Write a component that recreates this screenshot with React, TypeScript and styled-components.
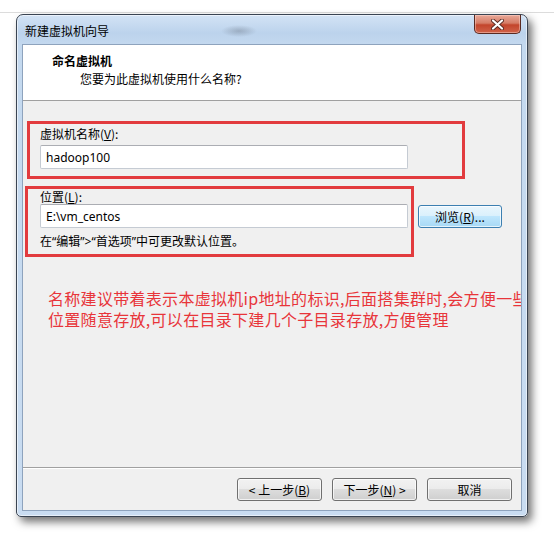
import styled, { createGlobalStyle } from "styled-components"

const GlobalStyle = createGlobalStyle`
  html, body {
    margin: 0;
    padding: 0;
    background: #fff;
  }
  body {
    font-family: "Noto Sans CJK SC", "Noto Sans", sans-serif;
    font-size: 12px;
    color: #000;
  }
`

const Desktop = styled.div`
  width: 554px;
  height: 533px;
  overflow: hidden;
  padding: 14px 0 0 16px;
  box-sizing: border-box;
  background: linear-gradient(180deg, #fff 0 12px, #dcdcdc 12px 13px, #fff 13px);
`

const Window = styled.div`
  width: 512px;
  height: 503px;
  box-sizing: border-box;
  display: flex;
  flex-direction: column;
  border: 1px solid #3a4452;
  border-radius: 7px 7px 5px 5px;
  padding: 0 5px 5px 5px;
  background:
    radial-gradient(ellipse 18px 6px at 222px 16px, rgba(90, 100, 115, 0.35), transparent),
    linear-gradient(180deg, #d3e3f5 0px, #bcd3ec 18px, #c4d9ef 30px, #c9dcf1 100%);
  box-shadow:
    inset 0 0 0 1px rgba(255, 255, 255, 0.55),
    4px 5px 9px rgba(0, 0, 0, 0.55);
`

const TitleBar = styled.div`
  height: 29px;
  flex: none;
  display: flex;
  justify-content: space-between;
  align-items: flex-start;
`

const TitleText = styled.span`
  margin: 8px 0 0 3px;
  line-height: 15px;
  font-size: 12px;
  color: #000;
`

const CloseButton = styled.div`
  width: 47px;
  height: 19px;
  box-sizing: border-box;
  margin-right: 1px;
  border: 1px solid #5a2a22;
  border-top: none;
  border-radius: 0 0 5px 5px;
  background: linear-gradient(180deg, #e9a999 0%, #d57c66 45%, #c3452c 55%, #d0634a 100%);
  box-shadow: inset 0 0 0 1px rgba(255, 220, 210, 0.45);
  display: flex;
  align-items: center;
  justify-content: center;
`

const Client = styled.div`
  flex: 1;
  display: flex;
  flex-direction: column;
  border: 1px solid #8ea3bd;
  background: #f0f0f0;
  overflow: hidden;
`

const Header = styled.div`
  height: 56px;
  flex: none;
  background: #fff;
  border-bottom: 1px solid #a0a0a0;
  padding: 8px 0 0 29px;
  box-sizing: border-box;
`

const HeaderTitle = styled.div`
  font-weight: bold;
  line-height: 15px;
`

const HeaderSub = styled.div`
  margin: 3px 0 0 28px;
  line-height: 15px;
`

const Body = styled.div`
  flex: 1;
  padding: 20px 0 0 2px;
  display: flex;
  flex-direction: column;
  align-items: flex-start;
`

const RedBox = styled.div<{ $width: number }>`
  width: ${p => p.$width}px;
  box-sizing: border-box;
  border: 3px solid #e23b3e;
  display: flex;
  flex-direction: column;
`

const NameBox = styled(RedBox)`
  margin-left: 2px;
  padding: 2px 0 7px 10px;
`

const LocationBox = styled(RedBox)`
  padding: 0 0 5px 12px;
`

const Label = styled.div`
  line-height: 15px;
`

const NameLabel = styled(Label)`
  margin-bottom: 4px;
`

const TextField = styled.input`
  width: 368px;
  height: 24px;
  box-sizing: border-box;
  border: 1px solid #c5cbd3;
  border-top-color: #abadb3;
  border-radius: 2px;
  padding: 0 5px;
  margin: 0;
  background: #fff;
  font-family: "Noto Sans", "Noto Sans CJK SC", sans-serif;
  font-size: 12px;
  color: #000;
  outline: none;
`

const Hint = styled.div`
  margin-top: 6px;
  line-height: 15px;
  font-family: "Noto Sans", "Noto Sans CJK SC", sans-serif;
`

const LocationRow = styled.div`
  display: flex;
  align-items: flex-start;
  margin-top: 7px;
`

const Button = styled.div<{ $primary?: boolean }>`
  width: 85px;
  height: 23px;
  box-sizing: border-box;
  border: 1px solid ${p => (p.$primary ? "#3c7fb1" : "#707070")};
  border-radius: 3px;
  display: flex;
  align-items: center;
  justify-content: center;
  line-height: 15px;
  white-space: pre;
  background: ${p =>
    p.$primary
      ? "linear-gradient(180deg, #eaf6fd 0%, #d9f0fc 50%, #bee6fd 50%, #a7d9f5 100%)"
      : "linear-gradient(180deg, #f2f2f2 0%, #ebebeb 50%, #dddddd 50%, #cfcfcf 100%)"};
  box-shadow: inset 0 0 0 1px rgba(255, 255, 255, 0.7);
`

const BrowseButton = styled(Button)`
  width: 84px;
  margin: 19px 0 0 4px;
`

const Note = styled.div`
  margin: 31px 0 0 23px;
  display: flex;
  flex-direction: column;
  font-size: 16px;
  line-height: 21px;
  letter-spacing: 0.3px;
  color: #e8353a;
  white-space: nowrap;
`

const NoteLine = styled.span`
  height: 21px;
`

const Footer = styled.div`
  height: 43px;
  flex: none;
  box-sizing: border-box;
  border-top: 1px solid #a0a0a0;
  box-shadow: inset 0 1px 0 #fff;
  padding: 10px 9px 0 0;
  display: flex;
  justify-content: flex-end;
  align-items: flex-start;
  gap: 10px;
`

const CloseIcon = () => (
  <svg width="13" height="11" viewBox="0 0 13 11">
    <path d="M2 1.5 L11 9.5 M11 1.5 L2 9.5" stroke="#5a2a22" strokeWidth="4" strokeLinecap="round" />
    <path d="M2 1.5 L11 9.5 M11 1.5 L2 9.5" stroke="#fff" strokeWidth="2.2" strokeLinecap="round" />
  </svg>
)

const App = () => {
  return (
    <>
      <GlobalStyle />
      <Desktop>
        <Window>
          <TitleBar>
            <TitleText>新建虚拟机向导</TitleText>
            <CloseButton>
              <CloseIcon />
            </CloseButton>
          </TitleBar>
          <Client>
            <Header>
              <HeaderTitle>命名虚拟机</HeaderTitle>
              <HeaderSub>您要为此虚拟机使用什么名称?</HeaderSub>
            </Header>
            <Body>
              <NameBox $width={438}>
                <NameLabel>
                  虚拟机名称(<u>V</u>):
                </NameLabel>
                <TextField readOnly value="hadoop100" />
              </NameBox>
              <LocationRow>
                <LocationBox $width={389}>
                  <Label>
                    位置(<u>L</u>):
                  </Label>
                  <TextField readOnly value="E:\vm_centos" />
                  <Hint>{"在“编辑”>“首选项”中可更改默认位置。"}</Hint>
                </LocationBox>
                <BrowseButton $primary>
                  浏览(<u>R</u>)...
                </BrowseButton>
              </LocationRow>
              <Note>
                <NoteLine>名称建议带着表示本虚拟机ip地址的标识,后面搭集群时,会方便一些</NoteLine>
                <NoteLine>位置随意存放,可以在目录下建几个子目录存放,方便管理</NoteLine>
              </Note>
            </Body>
            <Footer>
              <Button>
                {"< 上一步("}
                <u>B</u>)
              </Button>
              <Button>
                下一步(<u>N</u>
                {") >"}
              </Button>
              <Button>取消</Button>
            </Footer>
          </Client>
        </Window>
      </Desktop>
    </>
  )
}

export default App
